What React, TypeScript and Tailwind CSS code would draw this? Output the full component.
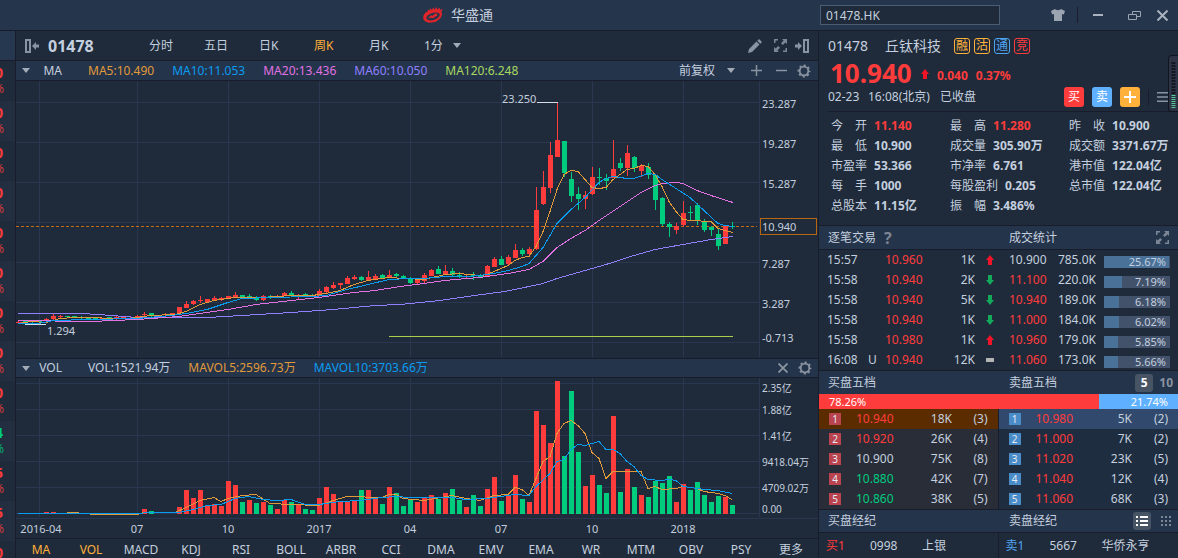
import { useState } from "react";
import clsx from "clsx";

const FONT = "font-['Noto_Sans','Noto_Sans_CJK_SC',sans-serif]";

const UP = "#ff3c3c";
const DOWN = "#00cc7e";

// [x, high, bodyTop, bodyBottom, low, rising]
type Candle = [number, number, number, number, number, 0 | 1];

const candles: Candle[] = [
  [18, 321, 322, 323, 323, 1], [25, 321, 321, 322, 323, 0], [32, 320, 321, 322, 323, 0], [39, 321, 321, 322, 322, 0],
  [46, 318, 319, 321, 321, 1], [53, 314, 316, 319, 320, 1], [60, 315, 316, 317, 318, 1], [67, 316, 316, 317, 318, 0],
  [74, 316, 316, 318, 318, 0], [81, 316, 317, 318, 319, 0], [88, 317, 318, 319, 319, 0], [95, 317, 318, 319, 319, 0],
  [102, 318, 318, 320, 320, 1], [109, 317, 317, 318, 319, 0], [116, 316, 317, 318, 320, 1], [123, 317, 317, 318, 319, 1],
  [130, 317, 318, 319, 319, 1], [137, 315, 316, 318, 319, 1], [144, 312, 314, 315, 316, 1], [151, 313, 313, 315, 317, 0],
  [158, 315, 315, 316, 317, 0], [165, 313, 314, 315, 316, 1], [172, 313, 313, 315, 315, 1], [179, 307, 307, 313, 313, 1],
  [186, 301, 304, 308, 308, 1], [193, 300, 301, 304, 305, 1], [200, 296, 300, 301, 303, 1], [207, 299, 299, 302, 303, 1],
  [214, 296, 298, 300, 301, 1], [221, 297, 298, 299, 301, 1], [228, 296, 296, 298, 298, 1], [235, 292, 295, 297, 297, 1],
  [242, 295, 295, 297, 298, 0], [249, 294, 296, 297, 298, 0], [256, 296, 297, 300, 301, 0], [263, 295, 296, 300, 301, 1],
  [270, 295, 296, 297, 299, 0], [277, 295, 296, 297, 298, 1], [284, 292, 293, 296, 296, 1], [291, 291, 293, 295, 296, 0],
  [298, 294, 295, 296, 299, 1], [305, 293, 294, 296, 297, 0], [312, 294, 295, 296, 297, 0], [319, 289, 291, 296, 296, 1],
  [326, 286, 287, 292, 293, 1], [333, 282, 285, 288, 289, 1], [340, 283, 283, 285, 289, 1], [347, 276, 278, 284, 284, 1],
  [354, 275, 277, 279, 280, 1], [361, 276, 277, 280, 281, 0], [368, 271, 277, 280, 281, 1], [375, 274, 276, 279, 280, 1],
  [382, 274, 275, 278, 279, 0], [389, 270, 275, 277, 278, 1], [396, 273, 274, 276, 278, 0], [403, 275, 276, 278, 279, 0],
  [410, 277, 278, 283, 284, 0], [417, 278, 280, 283, 285, 1], [424, 273, 275, 281, 283, 1], [431, 269, 270, 276, 276, 1],
  [438, 266, 269, 274, 274, 0], [445, 265, 271, 274, 275, 1], [452, 268, 271, 275, 277, 0], [459, 272, 275, 277, 278, 0],
  [466, 275, 276, 277, 279, 1], [473, 272, 275, 276, 280, 0], [480, 274, 275, 277, 278, 0], [487, 265, 266, 276, 277, 1],
  [494, 257, 259, 267, 267, 1], [501, 256, 259, 265, 265, 0], [508, 255, 257, 264, 265, 1], [515, 244, 250, 258, 258, 1],
  [522, 248, 250, 254, 256, 0], [529, 247, 249, 254, 255, 1], [536, 187, 210, 249, 250, 1], [543, 171, 187, 204, 205, 1],
  [550, 142, 155, 188, 193, 1], [557, 102, 140, 157, 157, 1], [564, 141, 141, 173, 177, 0], [571, 172, 179, 196, 202, 0],
  [578, 187, 194, 199, 210, 0], [585, 191, 195, 199, 209, 1], [592, 167, 177, 194, 195, 1], [599, 168, 177, 178, 185, 0],
  [606, 174, 178, 181, 190, 0], [613, 140, 169, 178, 178, 1], [620, 158, 163, 168, 171, 0], [627, 145, 153, 168, 176, 1],
  [634, 156, 157, 168, 172, 0], [641, 164, 166, 171, 177, 1], [648, 163, 167, 175, 179, 0], [655, 174, 175, 200, 210, 0],
  [662, 197, 198, 224, 226, 0], [669, 222, 224, 227, 237, 0], [676, 223, 226, 230, 234, 1], [683, 201, 213, 225, 227, 1],
  [690, 206, 212, 213, 220, 0], [697, 203, 205, 220, 225, 0], [704, 219, 222, 230, 232, 0], [711, 226, 227, 230, 236, 0],
  [718, 229, 234, 246, 250, 0], [725, 225, 226, 244, 244, 1], [732, 222, 226, 227, 229, 0],
];

// [x, top, rising]
const volumes: [number, number, 0 | 1][] = [
  [46, 512, 1], [53, 512, 1], [130, 513, 0], [144, 509, 1], [151, 511, 0], [179, 507, 1], [186, 490, 1], [193, 498, 1],
  [200, 490, 1], [207, 505, 1], [214, 504, 1], [221, 506, 1], [228, 481, 1], [235, 485, 1], [242, 502, 0], [249, 500, 1],
  [256, 503, 0], [263, 502, 1], [270, 505, 0], [277, 509, 1], [284, 500, 1], [291, 502, 0], [298, 505, 1], [305, 509, 0],
  [312, 510, 0], [319, 498, 1], [326, 487, 1], [333, 494, 1], [340, 501, 1], [347, 501, 1], [354, 501, 1], [361, 490, 0],
  [368, 490, 1], [375, 499, 1], [382, 504, 0], [389, 487, 1], [396, 493, 0], [403, 506, 0], [410, 500, 0], [417, 502, 1],
  [424, 497, 1], [431, 495, 1], [438, 499, 0], [445, 493, 1], [452, 489, 0], [459, 500, 0], [466, 507, 1], [473, 495, 0],
  [480, 506, 0], [487, 489, 1], [494, 477, 1], [501, 501, 0], [508, 495, 1], [515, 475, 1], [522, 499, 0], [529, 502, 1],
  [536, 411, 1], [543, 425, 1], [550, 443, 1], [557, 381, 1], [564, 456, 0], [571, 391, 0], [578, 452, 0], [585, 486, 1],
  [592, 475, 1], [599, 485, 0], [606, 493, 0], [613, 416, 1], [620, 492, 0], [627, 469, 1], [634, 487, 0], [641, 495, 1],
  [648, 497, 0], [655, 481, 0], [662, 483, 0], [669, 476, 0], [676, 502, 1], [683, 484, 1], [690, 490, 0], [697, 482, 0],
  [704, 495, 0], [711, 502, 0], [718, 496, 0], [725, 497, 1], [732, 505, 0],
];

const priceLines = [
  {
    color: "#9080ff",
    points:
      "18,313 82,313 112,315 137,317 207,317 242,315 291,312 333,309 375,305 400,304 440,300 482,294 505,291 529,286 543,283 557,278 578,272 606,264 634,255 655,249 683,244 711,239 733,236",
  },
  {
    color: "#e272e2",
    points:
      "18,320 90,321 137,319 179,316 207,312 228,309 256,304 291,300 319,297 354,292 375,290 400,286 424,283 445,280 466,278 480,277 508,273 529,269 543,261 557,247 571,238 585,230 599,220 620,206 641,192 655,185 662,183 676,182 683,183 697,190 711,195 733,202",
  },
  {
    color: "#e09a3a",
    points:
      "18,323 32,321 46,322 60,318 74,317 130,318 150,315 175,314 186,311 200,304 214,300 235,297 263,297 291,295 312,295 326,293 340,290 354,284 368,280 389,277 405,278 424,279 445,274 459,273 480,275 487,274 494,271 508,265 515,260 522,257 529,256 536,246 543,231 550,211 557,189 564,174 571,170 578,171 585,179 592,187 599,188 606,187 613,179 620,174 627,169 634,168 641,165 648,166 655,174 662,186 669,201 676,211 683,219 690,220 711,221 718,228 725,230 733,232",
  },
  {
    color: "#0a9cf0",
    points:
      "18,323 39,323 53,320 90,319 137,318 172,315 186,313 207,309 228,302 242,298 270,297 312,296 326,295 347,289 368,284 389,279 410,278 424,278 445,276 466,276 480,275 494,273 508,270 522,266 529,263 543,247 557,223 571,209 585,197 599,182 606,178 613,176 627,178 634,178 648,173 655,174 662,179 676,188 690,197 704,210 718,223 725,225 733,226",
  },
];

const volumeLines = [
  {
    color: "#e09a3a",
    points:
      "18,513 60,513 74,512 95,514 137,514 144,512 175,512 186,507 200,500 214,497 221,501 228,498 242,495 256,494 270,503 291,504 319,505 333,500 347,496 382,497 389,494 396,494 403,498 424,500 452,495 466,498 480,500 494,495 508,494 515,487 522,489 529,495 536,478 543,461 550,456 557,433 564,423 571,420 578,425 585,433 592,452 599,458 606,478 613,471 641,471 648,488 655,486 662,489 676,488 683,486 697,488 704,491 718,493 725,495 732,499",
  },
  {
    color: "#0a9cf0",
    points:
      "18,513 137,513 150,512 179,512 193,509 207,505 221,504 235,498 249,496 263,499 277,500 291,499 305,504 319,504 340,501 361,500 382,497 396,496 410,497 452,497 466,499 487,498 501,496 515,494 529,495 536,486 550,473 557,461 564,459 571,449 578,444 585,445 592,443 599,441 606,449 613,449 620,453 627,461 634,466 641,475 648,479 662,480 669,479 676,480 683,486 697,488 704,489 718,490 732,493",
  },
];

const gridX = [39, 137, 228, 319, 410, 501, 592, 683, 759];

const periods = ["分时", "五日", "日K", "周K", "月K", "1分"];
const indicators = ["MA", "VOL", "MACD", "KDJ", "RSI", "BOLL", "ARBR", "CCI", "DMA", "EMV", "EMA", "WR", "MTM", "OBV", "PSY", "更多"];

const quotes: { label: string; value: string; up?: boolean }[] = [
  { label: "今　开", value: "11.140", up: true },
  { label: "最　高", value: "11.280", up: true },
  { label: "昨　收", value: "10.900" },
  { label: "最　低", value: "10.900" },
  { label: "成交量", value: "305.90万" },
  { label: "成交额", value: "3371.67万" },
  { label: "市盈率", value: "53.366" },
  { label: "市净率", value: "6.761" },
  { label: "港市值", value: "122.04亿" },
  { label: "每　手", value: "1000" },
  { label: "每股盈利", value: "0.205" },
  { label: "总市值", value: "122.04亿" },
  { label: "总股本", value: "11.15亿" },
  { label: "振　幅", value: "3.486%" },
];

const trades = [
  { time: "15:57", flag: "", price: "10.960", size: "1K", dir: "up" },
  { time: "15:58", flag: "", price: "10.940", size: "2K", dir: "down" },
  { time: "15:58", flag: "", price: "10.940", size: "5K", dir: "down" },
  { time: "15:58", flag: "", price: "10.940", size: "1K", dir: "down" },
  { time: "15:58", flag: "", price: "10.980", size: "1K", dir: "up" },
  { time: "16:08", flag: "U", price: "10.940", size: "12K", dir: "flat" },
];

const turnover = [
  { price: "10.900", size: "785.0K", pct: "25.67%", bar: 98, flat: true },
  { price: "11.100", size: "220.0K", pct: "7.19%", bar: 28 },
  { price: "10.940", size: "189.0K", pct: "6.18%", bar: 23 },
  { price: "11.000", size: "184.0K", pct: "6.02%", bar: 23 },
  { price: "10.960", size: "179.0K", pct: "5.85%", bar: 21 },
  { price: "11.060", size: "173.0K", pct: "5.66%", bar: 21 },
];

const bids = [
  { price: "10.940", size: "18K", count: 3, color: "text-[#ff3c3c]" },
  { price: "10.920", size: "26K", count: 4, color: "text-[#ff3c3c]" },
  { price: "10.900", size: "75K", count: 8, color: "" },
  { price: "10.880", size: "42K", count: 7, color: "text-[#00cc7e]" },
  { price: "10.860", size: "38K", count: 5, color: "text-[#00cc7e]" },
];

const asks = [
  { price: "10.980", size: "5K", count: 2, color: "text-[#ff3c3c]" },
  { price: "11.000", size: "7K", count: 2, color: "text-[#ff3c3c]" },
  { price: "11.020", size: "23K", count: 5, color: "text-[#ff3c3c]" },
  { price: "11.040", size: "12K", count: 4, color: "text-[#ff3c3c]" },
  { price: "11.060", size: "68K", count: 3, color: "text-[#ff3c3c]" },
];

const watchDigits = ["0", "0", "0", "0", "0", "0", "0", "0", "0", "4", "5", "5", "0"];

const Caret = () => (
  <svg width="8" height="5" viewBox="0 0 8 5" className="shrink-0" aria-hidden="true">
    <path d="M0 0h8L4 5z" fill="#a3abb8" />
  </svg>
);

const Gear = () => (
  <svg width="14" height="14" viewBox="0 0 14 14" fill="none" stroke="#8a93a1" aria-hidden="true">
    <circle cx="7" cy="7" r="4.3" strokeWidth="1.8" />
    <circle cx="7" cy="7" r="5.7" strokeWidth="1.5" strokeDasharray="2.2 2.277" strokeDashoffset="1.1" />
  </svg>
);

const Expand = () => (
  <svg width="13" height="13" viewBox="0 0 13 13" fill="#7d8694" aria-hidden="true">
    <path d="M0 0h4v1.500H1.500V4H0zM9 11.500h2.500V9H13v4H9zM8 0h5v5l-1.600-1.600-2.600 2.600-1.800-1.800 2.600-2.600zM0 8v5h5l-1.600-1.600 2.600-2.600-1.800-1.800-2.600 2.600z" />
  </svg>
);

const PanelLeft = () => (
  <svg width="14" height="14" viewBox="0 0 14 14" aria-hidden="true">
    <rect x="1" y="1" width="4" height="12" fill="none" stroke="#8a93a1" strokeWidth="2" />
    <path d="M7 7l4-4v2.500h3v3h-3V11z" fill="#8a93a1" />
  </svg>
);

const PanelRight = () => (
  <svg width="14" height="14" viewBox="0 0 14 14" aria-hidden="true">
    <rect x="9" y="1" width="4" height="12" fill="none" stroke="#8a93a1" strokeWidth="2" />
    <path d="M7 7L3 3v2.500H0v3h3V11z" fill="#8a93a1" />
  </svg>
);

const Arrow = ({ dir }: { dir: string }) => {
  if (dir === "flat") return <span className="block h-1 w-2 bg-[#b4b4b4]" />;
  return (
    <svg width="8" height="10" viewBox="0 0 8 10" aria-hidden="true">
      {dir === "up" ? (
        <path d="M4 0l4 5H6v5H2V5H0z" fill="#f01428" />
      ) : (
        <path d="M4 10l4-5H6V0H2v5H0z" fill="#14a85a" />
      )}
    </svg>
  );
};

const TitleBar = () => (
  <header className="flex h-[31px] items-center border-b border-[#191c2b] bg-[#25354b]">
    <div className="flex flex-1 items-center justify-center gap-2 pl-24">
      <svg width="20" height="16" viewBox="0 0 20 16" aria-hidden="true">
        <path
          fill="#e0262b"
          fillRule="evenodd"
          d="M.6 12.500C-.8 9 1.500 5.800 5 4.300L4.600 2.600 6.600 3.600 7.200 1.200 8.900 3 10.200.4 11.600 2.500 13.600 0l.6 2.500L17 .4l-.2 2.600L20 2l-1.700 2.600C20.300 8 17.800 12 13.500 14.200 8.500 16.600 2.200 16 .6 12.500zM3.800 12c1.500 1.800 5 1.900 8.300.5 3.700-1.600 5.500-4.200 4.200-5.900C15 5 11.300 5.100 8 6.600c-3.500 1.500-5.500 3.800-4.200 5.400z"
        />
        <path d="M5 11.800c.8-2.200 2.400-3.600 3.800-3.200.9.300 1.500-.2 2.600-1.300l-.2-.8 3.600.2-1.200 2.900-.8-.7c-1.500 2-3 2.600-4.300 2-.9-.4-1.800.1-3.500.9z" fill="#e0262b" />
      </svg>
      <h1 className="text-sm">华盛通</h1>
    </div>
    <div className="flex w-[358px] shrink-0 items-center">
      <input
        type="text"
        aria-label="股票代码"
        defaultValue="01478.HK"
        className="h-5 w-[180px] border border-[#4a5d74] bg-[#1f2b3a] px-[5px] text-xs outline-none"
      />
      <div className="flex flex-1 items-center justify-end pr-2">
        <button aria-label="换肤">
          <svg width="14" height="12" viewBox="0 0 14 12" fill="#9ba4b1" aria-hidden="true">
            <path d="M4 0c1 1.500 5 1.500 6 0l4 2-1.200 3.500L11 5v7H3V5l-1.800.5L0 2z" />
          </svg>
        </button>
        <span className="mx-3 h-4 w-px bg-[#191c2b]" />
        <button aria-label="最小化" className="flex h-5 w-4 items-center justify-center">
          <span className="h-0.5 w-2.5 bg-[#a9b2bf]" />
        </button>
        <button aria-label="还原" className="ml-5 flex h-5 w-4 items-center justify-center">
          <svg width="13" height="9" viewBox="0 0 13 9" fill="none" stroke="#9ba4b1" aria-hidden="true">
            <path d="M4.500 3V.5h8v5H9M.5 3.500h8v5h-8z" />
          </svg>
        </button>
        <button aria-label="关闭" className="ml-3 flex h-5 w-4 items-center justify-center">
          <svg width="11" height="11" viewBox="0 0 11 11" stroke="#a9b2bf" strokeWidth="2" aria-hidden="true">
            <path d="M.5.5l10 10M10.500.5l-10 10" />
          </svg>
        </button>
      </div>
    </div>
  </header>
);

const WatchStrip = () => (
  <aside className="w-4 shrink-0 overflow-hidden border-r border-[#191c2b]">
    <div className="h-[30px] border-b border-[#191c2b] bg-[#26384f]" />
    {watchDigits.map((d, i) => (
      <div
        key={i}
        className={clsx(
          "flex h-10 flex-col items-end justify-center pr-[11px]",
          i % 2 ? "bg-[#232f40]" : "bg-[#1f2b3a]",
          d === "4" ? "text-[#00cc7e]" : "text-[#ff3c3c]"
        )}
      >
        <span className="pr-px text-sm leading-4 font-bold">{d}</span>
        <span className="leading-4 opacity-80">%</span>
      </div>
    ))}
  </aside>
);

const PriceChart = () => (
  <svg viewBox="16 81 802 277" className="block h-auto w-full" role="img" aria-label="周K线图">
    <g stroke="#2a3750" shapeRendering="crispEdges">
      {gridX.map((x) => <path key={x} d={`M${x}.5 81V357`} />)}
      {[102, 142, 182, 222, 262, 302, 342].map((y) => <path key={y} d={`M16 ${y}.5H759`} />)}
    </g>
    <path d="M16 226.500H757" stroke="#c46c14" strokeDasharray="3 2" />
    {candles.map(([x, high, top, bottom, low, rising]) => (
      <g key={x} fill={rising ? UP : DOWN} shapeRendering="crispEdges">
        <rect x={x} y={high} width="1" height={low - high} />
        <rect x={x - 2} y={top} width="5" height={bottom - top} />
      </g>
    ))}
    <g fill="none" transform="translate(0 0.5)" shapeRendering="crispEdges">
      {priceLines.map((line) => <polyline key={line.color} points={line.points} stroke={line.color} />)}
    </g>
    <path d="M389 336.500H733" stroke="#a8d04a" />
    <path d="M25 324.500H46M537 102.500H558" stroke="#d5dde8" />
    <g fill="#c4cfdf" fontSize="11">
      <text x="502" y="103">23.250</text>
      <text x="47" y="335">1.294</text>
      <text x="762" y="108">23.287</text>
      <text x="762" y="148">19.287</text>
      <text x="762" y="188">15.287</text>
      <text x="762" y="268">7.287</text>
      <text x="762" y="308">3.287</text>
      <text x="762" y="342">-0.713</text>
    </g>
    <rect x="760.500" y="218.500" width="56" height="16" fill="#1f2b3a" stroke="#b8660f" />
    <text x="762" y="231" fontSize="11" fill="#c4cfdf">10.940</text>
  </svg>
);

const VolumeChart = () => (
  <svg viewBox="16 378 802 160" className="block h-auto w-full" role="img" aria-label="成交量图">
    <g stroke="#2a3750" shapeRendering="crispEdges">
      {gridX.map((x) => <path key={x} d={`M${x}.5 378V517`} />)}
      {[383, 409, 435, 461, 487, 513].map((y) => <path key={y} d={`M16 ${y}.5H759`} />)}
      <path d="M16 518.500H818" />
    </g>
    {volumes.map(([x, top, rising]) => (
      <rect key={x} x={x - 2} y={top} width="5" height={514 - top} fill={rising ? UP : DOWN} shapeRendering="crispEdges" />
    ))}
    <g fill="none" transform="translate(0 0.5)" shapeRendering="crispEdges">
      {volumeLines.map((line) => <polyline key={line.color} points={line.points} stroke={line.color} />)}
    </g>
    <g fill="#c4cfdf" fontSize="10">
      <text x="762" y="392">2.35亿</text>
      <text x="762" y="414">1.88亿</text>
      <text x="762" y="440">1.41亿</text>
      <text x="762" y="466">9418.04万</text>
      <text x="762" y="492">4709.02万</text>
      <text x="762" y="513">0.00</text>
    </g>
    <g fill="#c4cfdf" fontSize="11" textAnchor="middle">
      {["2016-04", "07", "10", "2017", "04", "07", "10", "2018"].map((label, i) => (
        <text key={i} x={i === 0 ? 41 : gridX[i]} y="533">{label}</text>
      ))}
    </g>
  </svg>
);

const ChartPanel = () => {
  const [period, setPeriod] = useState("周K");

  return (
    <main className="min-w-0 flex-1 border-r border-[#191c2b]">
      <div className="flex h-[30px] items-center border-b border-[#191c2b] pr-[9px] pl-[9px]">
        <button aria-label="收起左栏"><PanelLeft /></button>
        <span className="ml-[9px] w-[101px] text-base font-bold">01478</span>
        {periods.map((p) => (
          <button
            key={p}
            onClick={() => setPeriod(p)}
            className={clsx("flex w-[55px] items-center gap-2.5", p === period && "text-[#ffb13b]")}
          >
            {p}
            {p === "1分" && <Caret />}
          </button>
        ))}
        <div className="ml-auto flex items-center gap-2">
          <button aria-label="画线" className="mr-1">
            <svg width="14" height="14" viewBox="0 0 14 14" fill="#8a93a1" aria-hidden="true">
              <path d="M0 14l1-4 7.500-7.500 3 3L4 13zM9.300 1.700L11 0l3 3-1.700 1.700z" />
            </svg>
          </button>
          <button aria-label="全屏"><Expand /></button>
          <button aria-label="收起右栏"><PanelRight /></button>
        </div>
      </div>

      <div className="flex h-5 items-center border-b border-[#191c2b] bg-[#24344b] pr-[7px] pl-1.5">
        <button aria-label="选择主图指标"><Caret /></button>
        <span className="w-8 text-right">MA</span>
        <div className="ml-[26px] flex gap-[18px]">
          <span className="text-[#e09a3a]">MA5:10.490</span>
          <span className="text-[#0a9cf0]">MA10:11.053</span>
          <span className="text-[#e272e2]">MA20:13.436</span>
          <span className="text-[#9080ff]">MA60:10.050</span>
          <span className="text-[#a8d860]">MA120:6.248</span>
        </div>
        <div className="ml-auto flex items-center">
          <button className="flex items-center gap-3">前复权<Caret /></button>
          <button aria-label="放大" className="ml-4">
            <svg width="11" height="11" viewBox="0 0 11 11" stroke="#8a93a1" strokeWidth="1.500" aria-hidden="true">
              <path d="M0 5.500h11M5.500 0v11" />
            </svg>
          </button>
          <button aria-label="缩小" className="ml-3.5">
            <svg width="11" height="11" viewBox="0 0 11 11" stroke="#8a93a1" strokeWidth="1.500" aria-hidden="true">
              <path d="M0 5.500h11" />
            </svg>
          </button>
          <button aria-label="主图设置" className="ml-2.5"><Gear /></button>
        </div>
      </div>
      <PriceChart />

      <div className="flex h-5 items-center border-y border-[#191c2b] bg-[#24344b] pr-1.5 pl-1.5">
        <button aria-label="选择副图指标"><Caret /></button>
        <span className="w-8 text-right">VOL</span>
        <div className="ml-[26px] flex gap-[18px]">
          <span>VOL:1521.94万</span>
          <span className="text-[#e09a3a]">MAVOL5:2596.73万</span>
          <span className="text-[#0a9cf0]">MAVOL10:3703.66万</span>
        </div>
        <div className="ml-auto flex items-center gap-2.5">
          <button aria-label="关闭副图">
            <svg width="10" height="10" viewBox="0 0 10 10" stroke="#8a93a1" strokeWidth="1.800" aria-hidden="true">
              <path d="M.5.5l9 9M9.500.5l-9 9" />
            </svg>
          </button>
          <button aria-label="副图设置"><Gear /></button>
        </div>
      </div>
      <VolumeChart />

      <div className="flex h-[22px] items-center border-t border-[#191c2b] pr-0.5">
        {indicators.map((name, i) => (
          <button key={name} className={clsx("flex-1 text-center", i < 2 && "text-[#ffb13b]")}>
            {name}
          </button>
        ))}
      </div>
    </main>
  );
};

const SectionBar = ({ left, right, children, className }: { left: React.ReactNode; right: string; children?: React.ReactNode; className: string }) => (
  <div className={clsx("flex items-center border-t border-[#191c2b] bg-[#24344b] pl-[9px]", className)}>
    <h2 className="flex w-[181px] items-center gap-2">{left}</h2>
    <h2>{right}</h2>
    <div className="ml-auto flex items-center gap-1.5">{children}</div>
  </div>
);

const DepthTable = ({ rows, side }: { rows: typeof bids; side: "bid" | "ask" }) => (
  <table
    aria-label={side === "bid" ? "买盘五档" : "卖盘五档"}
    className={clsx("w-full table-fixed border-collapse", side === "bid" ? "bg-[#282d38]" : "bg-[#1f2d40]")}
  >
    <tbody>
      {rows.map((row, i) => (
        <tr
          key={row.price}
          className={clsx("h-5", i === 0 && (side === "bid" ? "bg-[#5a2c00]" : "bg-[#30496c]"))}
        >
          <td className="w-[37px] p-0 pl-2.5">
            <span
              className={clsx(
                "flex size-3 items-center justify-center text-[10px] leading-3 text-[#e6edf5]",
                side === "bid" ? "bg-[#b9434f]" : "bg-[#4a8cc8]"
              )}
            >
              {i + 1}
            </span>
          </td>
          <td className={clsx("w-12 p-0", row.color)}>{row.price}</td>
          <td className="p-0 text-right">{row.size}</td>
          <td className="w-[46px] p-0 pr-2.5 text-right">({row.count})</td>
        </tr>
      ))}
    </tbody>
  </table>
);

const QuotePanel = () => (
  <section className="relative w-[359px] shrink-0">
    <div className="ml-[9px] h-[81px] border-b border-[#191c2b]">
      <div className="flex h-[30px] items-center text-sm">
        <span className="w-[57px]">01478</span>
        <span className="w-[69px]">丘钛科技</span>
        <div className="flex gap-1 text-xs leading-[14px]">
          <span className="size-4 rounded-[3px] border border-[#ffb13b] text-center text-[#ffb13b]">融</span>
          <span className="size-4 rounded-[3px] border border-[#ffb13b] text-center text-[#ffb13b]">沽</span>
          <span className="size-4 rounded-[3px] border border-[#4fa3f0] text-center text-[#4fa3f0]">通</span>
          <span className="size-4 rounded-[3px] border border-[#ff3c3c] text-center text-[#ff3c3c]">竞</span>
        </div>
      </div>
      <div className="flex h-6 items-center font-bold text-[#ff3c3c]">
        <span className="w-[93px] pl-0.5 text-[26px] leading-6">10.940</span>
        <span className="mt-1.5 flex items-center gap-2">
          <span className="-mt-1"><Arrow dir="up" /></span>
          <span>0.040</span>
          <span>0.37%</span>
        </span>
      </div>
      <div className="flex h-6 items-center">
        <span className="w-10">02-23</span>
        <span className="w-[72px]">16:08(北京)</span>
        <span>已收盘</span>
        <div className="ml-auto flex items-center gap-2 pr-2.5">
          <button className="size-5 rounded-[3px] bg-[#ff3c3c] text-center leading-5 text-white">买</button>
          <button className="size-5 rounded-[3px] bg-[#5fb0ff] text-center leading-5 text-white">卖</button>
          <button aria-label="加自选" className="flex size-5 items-center justify-center rounded-[3px] bg-[#ffb13b]">
            <svg width="12" height="12" viewBox="0 0 12 12" stroke="#fff" strokeWidth="2" aria-hidden="true">
              <path d="M0 6h12M6 0v12" />
            </svg>
          </button>
          <span className="h-4 w-px bg-[#191c2b]" />
          <button aria-label="菜单">
            <svg width="11" height="10" viewBox="0 0 11 10" fill="#8a93a1" aria-hidden="true">
              <path d="M0 0h11v1.500H0zM0 4.250h11v1.500H0zM0 8.500h11V10H0z" />
            </svg>
          </button>
        </div>
      </div>
    </div>

    <dl className="grid h-[113px] grid-cols-[119px_119px_1fr] content-start pt-1 pl-3 leading-5">
      {quotes.map((q) => (
        <div key={q.label} className="flex gap-[7px] whitespace-nowrap">
          <dt>{q.label}</dt>
          <dd className={clsx("font-bold", q.up && "text-[#ff3c3c]")}>{q.value}</dd>
        </div>
      ))}
    </dl>

    <SectionBar
      left={<>逐笔交易<span className="text-base font-bold text-[#7d8694]">?</span></>}
      right="成交统计"
      className="h-6 pr-[9px]"
    >
      <button aria-label="展开成交统计"><Expand /></button>
    </SectionBar>

    <div className="flex border-t border-[#191c2b]">
      <table aria-label="逐笔交易" className="w-[181px] table-fixed border-collapse">
        <tbody>
          {trades.map((t, i) => (
            <tr key={i} className="h-5">
              <td className="w-[49px] p-0 pl-2">{t.time}</td>
              <td className="w-[17px] p-0">{t.flag}</td>
              <td className="w-[42px] p-0 text-[#ff3c3c]">{t.price}</td>
              <td className="w-12 p-0 text-right">{t.size}</td>
              <td className="p-0 pl-[11px]"><Arrow dir={t.dir} /></td>
            </tr>
          ))}
        </tbody>
      </table>
      <table aria-label="成交统计" className="flex-1 table-fixed border-collapse">
        <tbody>
          {turnover.map((t) => (
            <tr key={t.price} className="h-5">
              <td className={clsx("w-[53px] p-0 pl-[9px]", !t.flat && "text-[#ff3c3c]")}>{t.price}</td>
              <td className="w-[43px] p-0 text-right">{t.size}</td>
              <td className="p-0 pt-1 pr-2 pl-2">
                <div className="relative h-3 bg-[#42526b]">
                  <div className="h-3 bg-[#4a7299]" style={{ width: `${t.bar}%` }} />
                  <span className="absolute inset-y-0 right-1 text-[11px] leading-3">{t.pct}</span>
                </div>
              </td>
            </tr>
          ))}
        </tbody>
      </table>
    </div>

    <SectionBar left="买盘五档" right="卖盘五档" className="h-6 pr-[5px]">
      <button className="size-[18px] rounded-[3px] bg-[#465464] text-center leading-[18px] font-bold text-white">5</button>
      <button className="font-bold text-[#8a93a1]">10</button>
    </SectionBar>
    <div className="flex h-[15px] text-[11px] leading-[15px] text-white">
      <span className="w-[78%] bg-[#ff3c3c] pl-2.5">78.26%</span>
      <span className="flex-1 bg-[#5fb0ff] pr-2.5 text-right">21.74%</span>
    </div>
    <div className="grid grid-cols-2 divide-x divide-[#191c2b]">
      <DepthTable rows={bids} side="bid" />
      <DepthTable rows={asks} side="ask" />
    </div>

    <SectionBar left="买盘经纪" right="卖盘经纪" className="h-[23px] pr-[3px]">
      <button aria-label="列表" className="flex size-[18px] items-center justify-center rounded-[3px] bg-[#465464]">
        <svg width="12" height="10" viewBox="0 0 12 10" fill="#fff" aria-hidden="true">
          <path d="M0 0h2v2H0zM4 0h8v2H4zM0 4h2v2H0zM4 4h8v2H4zM0 8h2v2H0zM4 8h8v2H4z" />
        </svg>
      </button>
      <button aria-label="网格" className="px-1">
        <svg width="10" height="10" viewBox="0 0 10 10" fill="#7d8694" aria-hidden="true">
          <path d="M0 0h2v2H0zM4 0h2v2H4zM8 0h2v2H8zM0 4h2v2H0zM4 4h2v2H4zM8 4h2v2H8zM0 8h2v2H0zM4 8h2v2H4zM8 8h2v2H8z" />
        </svg>
      </button>
    </SectionBar>
    <div className="grid h-[26px] grid-cols-2 items-center divide-x divide-[#191c2b] border-t border-[#191c2b] leading-[25px]">
      <div className="flex pl-[7px]">
        <span className="w-11 text-[#ff3c3c]">买1</span>
        <span className="w-[52px]">0998</span>
        <span>上银</span>
      </div>
      <div className="flex pl-[7px]">
        <span className="w-11 text-[#4fa3f0]">卖1</span>
        <span className="w-[52px]">5667</span>
        <span>华侨永亨</span>
      </div>
    </div>

    {/* level meter floating over the right edge */}
    <div className="absolute top-6 right-0 h-[57px] w-2.5 rounded-l border border-r-0 border-[#11151f] bg-[#2d3446]">
      <svg width="5" height="46" viewBox="0 0 5 46" className="mt-1.5 ml-0.5" aria-hidden="true">
        <path d="M2.500 0V32" stroke="#131722" strokeWidth="4" strokeDasharray="2 1" />
        <path d="M2.500 33V46" stroke="#57c79a" strokeWidth="4" strokeDasharray="1 1" />
      </svg>
    </div>
  </section>
);

export default function App() {
  return (
    <div className={clsx(FONT, "min-h-screen overflow-hidden bg-[#1f2b3a] text-xs text-[#c4cfdf]")}>
      <TitleBar />
      <div className="flex">
        {/* the watch list runs past the chart, so it is clipped at the bottom */}
        <div className="flex max-h-[527px] shrink-0">
          <WatchStrip />
        </div>
        <ChartPanel />
        <QuotePanel />
      </div>
    </div>
  );
}
